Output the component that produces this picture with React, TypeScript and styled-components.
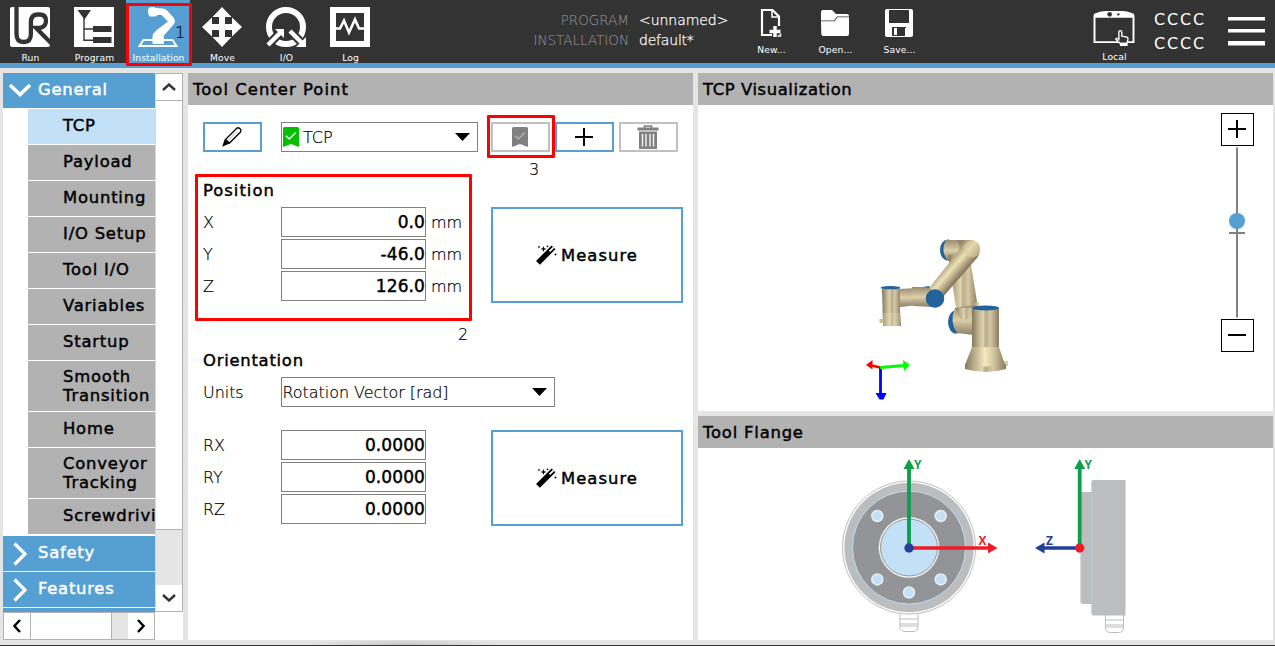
import React from "react";
import styled, { createGlobalStyle, css } from "styled-components";

const BLUE = "#569fd3";
const GREY = "#b2b2b2";
const DARK = "#333333";

const GlobalStyle = createGlobalStyle`
  * { box-sizing: border-box; }
  body { margin: 0; background: #e5e5e5; }
`;

const strong = css`
  font-size: 16.4px;
  font-weight: 400;
  letter-spacing: 1.05px;
  -webkit-text-stroke: 0.45px currentColor;
`;

const light = css`
  font-size: 16px;
  font-weight: 200;
  letter-spacing: -0.05px;
  -webkit-text-stroke: 0.2px currentColor;
`;

const Screen = styled.div`
  position: relative;
  width: 1275px;
  height: 646px;
  overflow: hidden;
  display: flex;
  flex-direction: column;
  background: #e5e5e5;
  border-bottom: 1px solid ${DARK};
  font-family: "DejaVu Sans", sans-serif;
  color: #000;
  white-space: nowrap;
`;

/* ---------- header ---------- */

const Header = styled.header`
  height: 68px;
  flex: none;
  display: flex;
  background: ${DARK};
  border-bottom: 5px solid ${BLUE};
  color: #fff;
`;

const Tabs = styled.nav`
  display: flex;
  margin-left: -2px;
  width: 512px;
`;

const Tab = styled.div<{ $active?: boolean }>`
  width: 64px;
  height: 63px;
  padding-top: 7px;
  display: flex;
  flex-direction: column;
  align-items: center;
  background: ${(p) => (p.$active ? BLUE : "transparent")};
  svg { display: block; flex: none; }
`;

const Caption = styled.span<{ $gap?: number }>`
  margin-top: ${(p) => p.$gap ?? 4}px;
  font-size: 9.2px;
  line-height: 13px;
  letter-spacing: 0.1px;
  padding-left: 1px;
`;

const FileInfo = styled.dl`
  margin: 10px 0 0;
  width: 229px;
  height: 40px;
  display: grid;
  grid-template-columns: 119px 1fr;
  column-gap: 10px;
  grid-auto-rows: 20px;
  line-height: 20px;
`;

const InfoKey = styled.dt`
  text-align: right;
  font-size: 13.5px;
  font-weight: 200;
  color: #999;
`;

const InfoValue = styled.dd<{ $spacing?: number }>`
  margin: 0;
  font-size: 14px;
  font-weight: 200;
  letter-spacing: ${(p) => p.$spacing ?? 0}px;
  -webkit-text-stroke: 0.25px #fff;
`;

const FileActions = styled.div`
  display: flex;
  margin-right: auto;
`;

const FileAction = styled.div`
  width: 64px;
  padding-top: 8px;
  display: flex;
  flex-direction: column;
  align-items: center;
  svg { display: block; }
`;

const Control = styled.div`
  width: 64px;
  padding-top: 7px;
  display: flex;
  flex-direction: column;
  align-items: center;
  svg { display: block; }
`;

const Checksum = styled.div`
  width: 52px;
  margin: 8px 0 0 8px;
  font-size: 16px;
  line-height: 24px;
  letter-spacing: 1.8px;
`;

const MenuButton = styled.div`
  width: 37px;
  margin: 17px 10px 0 22px;
  display: flex;
  flex-direction: column;
  gap: 8px;
`;

const MenuBar = styled.i`
  height: 4.2px;
  background: #fff;
  border-bottom: 1px solid #999;
`;

/* ---------- layout ---------- */

const Main = styled.main`
  flex: 1;
  display: flex;
  gap: 5px;
  padding: 5px 2px 5px 3px;
`;

const Sidebar = styled.aside`
  width: 180px;
  height: 567px;
  background: #fff;
`;

const SidebarTop = styled.div`
  display: flex;
  height: 539px;
`;

const Menu = styled.div`
  width: 152px;
  height: 539px;
  overflow: hidden;
`;

const Group = styled.div<{ $open?: boolean }>`
  height: 36px;
  padding-bottom: 2px;
  border-bottom: 1px solid #fff;
  background: ${BLUE};
  color: #fff;
  display: flex;
  align-items: center;
  ${strong}
  letter-spacing: 0.75px;
  svg {
    width: ${(p) => (p.$open ? 22 : 14)}px;
    margin: ${(p) => (p.$open ? "1px 7px 0 6px" : "2px 11px 0 10px")};
    flex: none;
  }
`;

const Items = styled.div`
  padding-bottom: 1px;
  margin-left: 25px;
`;

const Item = styled.div<{ $active?: boolean; $tall?: boolean }>`
  height: ${(p) => (p.$tall ? 51 : 36)}px;
  border-bottom: 1px solid #fff;
  padding: 0 0 ${(p) => (p.$tall ? 1 : 3)}px 35px;
  display: flex;
  align-items: center;
  background: ${(p) => (p.$active ? "#c2e0f6" : GREY)};
  ${strong}
  letter-spacing: 0.8px;
  line-height: 19px;
  white-space: pre;
`;

const VScroll = styled.div`
  width: 28px;
  border: 1px solid ${GREY};
  border-left-color: #d8d8d8;
  display: flex;
  flex-direction: column;
`;

const ScrollButton = styled.div`
  width: 26px;
  height: 26px;
  flex: none;
  background: #fff;
  display: flex;
  align-items: center;
  justify-content: center;
`;

const VThumb = styled.div`
  height: 430px;
  background: #fff;
  border-top: 1px solid ${GREY};
  border-bottom: 1px solid ${GREY};
`;

const Track = styled.div`
  flex: 1;
  background: #e5e5e5;
`;

const HScroll = styled.div`
  width: 152px;
  height: 28px;
  border: 1px solid ${GREY};
  display: flex;
`;

const HThumb = styled.div`
  width: 82px;
  background: #fff;
  border-left: 1px solid ${GREY};
  border-right: 1px solid ${GREY};
`;

const Panel = styled.section<{ $w: number; $h: number }>`
  width: ${(p) => p.$w}px;
  height: ${(p) => p.$h}px;
  background: #fff;
`;

const PanelTitle = styled.h2<{ $spacing?: number }>`
  margin: 0;
  height: 32px;
  line-height: 32px;
  padding: 1px 0 0 5px;
  background: ${GREY};
  ${strong}
  letter-spacing: ${(p) => p.$spacing ?? 1.05}px;
`;

const RightColumn = styled.div`
  display: flex;
  flex-direction: column;
  gap: 5px;
`;

/* ---------- TCP form ---------- */

const Form = styled.div`
  padding: 17px 10px 0 15px;
`;

const TcpBar = styled.div`
  display: flex;
  height: 30px;
`;

const ToolButton = styled.button<{ $disabled?: boolean; $left?: number }>`
  width: 59px;
  height: 30px;
  margin: 0 0 0 ${(p) => p.$left ?? 0}px;
  padding: 0 2px 0 0;
  border: 2px solid ${(p) => (p.$disabled ? "#c0c0c0" : BLUE)};
  background: #fff;
  display: flex;
  align-items: center;
  justify-content: center;
`;

const Select = styled.div<{ $w: number; $left?: number }>`
  width: ${(p) => p.$w}px;
  height: 30px;
  margin-left: ${(p) => p.$left ?? 0}px;
  padding: 0 7px 0 0.5px;
  border: 1px solid #808080;
  display: flex;
  align-items: center;
  ${light}
  svg:last-child { margin-left: auto; }
`;

const TagIcon = styled.span`
  display: flex;
  margin: 0 4px 0 0.5px;
`;

const SectionTitle = styled.h3<{ $top: number; $spacing?: number }>`
  margin: ${(p) => p.$top}px 0 2px;
  height: 30px;
  line-height: 30px;
  padding-top: 1px;
  ${strong}
  letter-spacing: ${(p) => p.$spacing ?? 1}px;
`;

const FieldBlock = styled.div<{ $top?: number }>`
  margin-top: ${(p) => p.$top ?? 0}px;
  height: 96px;
  display: flex;
  justify-content: space-between;
`;

const Fields = styled.div`
  display: flex;
  flex-direction: column;
  gap: 2px;
`;

const Field = styled.label`
  height: 30px;
  display: flex;
  align-items: center;
  ${light}
`;

const FieldName = styled.span`
  width: 78px;
`;

const FieldValue = styled.span`
  width: 145px;
  height: 30px;
  margin-right: 5px;
  line-height: 29px;
  border: 1px solid #808080;
  text-align: right;
  ${strong}
  font-size: 17px;
  letter-spacing: 0.1px;
`;

const MeasureButton = styled.button`
  width: 192px;
  height: 96px;
  padding: 0 1px 0 0;
  border: 2px solid ${BLUE};
  background: #fff;
  color: #000;
  font-family: inherit;
  display: flex;
  align-items: center;
  justify-content: center;
  gap: 4px;
  ${strong}
`;

/* ---------- 3D view ---------- */

const View = styled.div`
  height: 306px;
  display: flex;
  justify-content: flex-end;
  padding: 8px 19px 0 0;
`;

const Robot = styled.svg`
  margin: 124px 212px 0 0;
`;

const Zoom = styled.div`
  width: 33px;
  display: flex;
  flex-direction: column;
`;

const ZoomButton = styled.div`
  width: 33px;
  height: 33px;
  padding: 0 2px 2px 0;
  border: 1px solid #000;
  display: flex;
  align-items: center;
  justify-content: center;
`;

const Flange = styled.svg`
  display: block;
`;

/* ---------- annotations ---------- */

const Mark = styled.div<{ $x: number; $y: number; $w: number; $h: number }>`
  position: absolute;
  left: ${(p) => p.$x}px;
  top: ${(p) => p.$y}px;
  width: ${(p) => p.$w}px;
  height: ${(p) => p.$h}px;
  border: 3px solid #f00;
  border-radius: 1px;
`;

const MarkNumber = styled.span<{ $x: number; $y: number }>`
  position: absolute;
  left: ${(p) => p.$x}px;
  top: ${(p) => p.$y}px;
  line-height: 20px;
  ${light}
`;

const BottomShade = styled.div`
  position: absolute;
  left: 305px;
  top: 640px;
  width: 200px;
  height: 5px;
  background: radial-gradient(ellipse 100px 6px at 50% 100%, #c6c6c6, #e5e5e5);
`;

/* ---------- icons ---------- */

const RunIcon = () => (
  <svg width="40" height="40" viewBox="0 0 40 40">
    <rect width="40" height="40" rx="2" fill="#fff" />
    <path d="M6.500-1V27q0 8 7.200 8t7.200-8V15q0-7.500 7-7.500h1.600q6.500 0 6.500 6.300T29.500 21H26L42 37" fill="none" stroke={DARK} strokeWidth="4.300" />
  </svg>
);

const ProgramIcon = () => (
  <svg width="40" height="40" viewBox="0 0 40 40">
    <path fill="#fff" d="M0 0h40v40H0z" />
    <path fill={DARK} d="M3.500 3h13.500l-6.500 9.500zM19 19h18.500v6H19zM19 30h18.500v6H19z" />
    <path d="M10 10v23.200h9M10 22h9" stroke={DARK} strokeWidth="1.400" fill="none" />
  </svg>
);

const InstallationIcon = () => (
  <svg width="40" height="40" viewBox="0 0 40 40">
    <path d="M5.500 33h29l4 6h-37z" fill="none" stroke="#fff" strokeWidth="2" />
    <path d="M14.500 37V30q0-5.500 5.500-5.500T26 30v7z" fill="#fff" />
    <path d="M10.500 1.500Q14-1.500 18 1l7 .5q3 .5 5 3l5.500 6q2.500 3 .5 6.500L26.500 28 17 26.500l.5-2.500L30 14.500 23.500 8h-4l-2 1.500h-6q-2.500-4-1-8z" fill="#fff" />
  </svg>
);

const MoveIcon = () => (
  <svg width="40" height="40" viewBox="0 0 40 40">
    <path fill="#fff" d="M20 0l9.500 10H23v7h7v-6.500L40 20l-10 9.500V23h-7v7h6.500L20 40l-9.500-10H17v-7h-7v6.500L0 20l10-9.500V17h7v-7h-6.500z" />
  </svg>
);

const IoIcon = () => (
  <svg width="40" height="40" viewBox="0 0 40 40">
    <circle cx="20" cy="20" r="17" fill="none" stroke="#fff" strokeWidth="6" />
    <path d="M1 39l14-14M24 24l13 13" stroke={DARK} strokeWidth="8.500" />
    <path d="M2 38l12-12M24 24l12 12" stroke="#fff" strokeWidth="4.400" />
    <path d="M9 22h9v9zM40 30v10H30z" fill="#fff" />
  </svg>
);

const LogIcon = () => (
  <svg width="40" height="40" viewBox="0 0 40 40">
    <path fill="#fff" d="M0 0h40v40H0z" />
    <path fill={DARK} d="M6 6h28v28H6z" />
    <path d="M6 21.500h4l4-8 5 12 6-13 4 9h5" stroke="#fff" strokeWidth="2.600" fill="none" />
  </svg>
);

const NewIcon = () => (
  <svg width="22" height="30" viewBox="0 0 22 30">
    <path d="M19 18V8.500L12.500 2H2v25h10" fill="none" stroke="#fff" strokeWidth="2.200" />
    <path d="M12 2v7h8" fill="none" stroke="#fff" strokeWidth="1.500" />
    <path d="M15 18v11M9.500 23.500h11" stroke="#fff" strokeWidth="3.400" />
    <path d="M17.500 28h3v-2.500" stroke="#fff" strokeWidth="1.600" fill="none" />
  </svg>
);

const OpenIcon = () => (
  <svg width="30" height="30" viewBox="0 0 30 30">
    <path fill="#fff" d="M1 4q0-2 2-2h9l4 4h11q2 0 2 2v.5H17l-3 4H1z" />
    <path fill="#fff" d="M1 13.300h13.500l3-4H29V26q0 2-2 2H3.500q-2 0-2.200-2z" />
  </svg>
);

const SaveIcon = () => (
  <svg width="30" height="30" viewBox="0 0 30 30">
    <rect x="1" y="1" width="28" height="28" rx="2" fill="#fff" />
    <path fill={DARK} d="M5 2h20v13H5zM8 19h14v9H8z" />
    <path fill="#fff" d="M10 20h3v7h-3zM21 20h1v8h-1z" />
  </svg>
);

const PendantIcon = () => (
  <svg width="44" height="40" viewBox="0 0 44 40">
    <path fill="#fff" d="M1 9q0-2 2-2.500Q9 4 14 4h16q5 0 11 2.500 2 .5 2 2.500v28H1z" />
    <path fill={DARK} d="M3 11h38v24H3z" />
    <circle cx="17.500" cy="7.500" r="2.400" fill={DARK} />
    <circle cx="26.500" cy="7.500" r="1.200" fill={DARK} />
    <path
      d="M27 26q0-1.800 1.400-1.800t1.600 1.800v4l3 .4 2.300.6q1.200.4 1 2l-1 4.500v2.500h-6.500V38l-5-5q1-1.800 3.200.3z"
      fill={DARK}
      stroke="#fff"
      strokeWidth="1.400"
    />
    <path fill="#fff" d="M28.200 36.500h7V40h-7z" />
  </svg>
);

const Chevron = ({ d, size, stroke = "#333", w = 2.4 }: { d: string; size: [number, number]; stroke?: string; w?: number }) => (
  <svg width={size[0]} height={size[1]} viewBox={`0 0 ${size[0]} ${size[1]}`}>
    <path d={d} fill="none" stroke={stroke} strokeWidth={w} />
  </svg>
);

const Pencil = () => (
  <svg width="22" height="22" viewBox="0 0 22 22">
    <path d="M4.500 13.500L15.500 2.500Q17 1 18.800 2.600T19.500 6L8.500 17z" fill="#fff" stroke="#000" strokeWidth="1.300" />
    <path d="M7 14.500l9-9" stroke="#888" strokeWidth=".6" />
    <path d="M1.200 20.800L3.600 13.500l5 4z" fill="#000" />
  </svg>
);

const Bookmark = ({ color, check }: { color: string; check: string }) => (
  <svg width="16" height="20" viewBox="0 0 16 20">
    <path d="M1.500 0h13Q16 0 16 1.500V20l-8-3-8 3V1.500Q0 0 1.500 0z" fill={color} />
    <path d="M3 8.800l3.300 3.200 6.500-6.500" fill="none" stroke={check} strokeWidth="1.600" />
  </svg>
);

const Plus = () => (
  <svg width="18" height="18" viewBox="0 0 18 18">
    <path d="M9 0v18M0 9h18" stroke="#000" strokeWidth="2" />
  </svg>
);

const Minus = () => (
  <svg width="18" height="18" viewBox="0 0 18 18">
    <path d="M0 9h18" stroke="#000" strokeWidth="2" />
  </svg>
);

const Trash = () => (
  <svg width="22" height="24" viewBox="0 0 22 24">
    <path d="M7.500 3V1h7v2" fill="none" stroke="#808080" strokeWidth="1.700" />
    <path fill="#808080" d="M.5 2.500h21v3H.5zM2 6.500h18V24H2z" />
    <path d="M5.500 9v12.500M9 9v12.500M13 9v12.500M16.500 9v12.500" stroke="#fff" strokeWidth="1.300" />
  </svg>
);

const Arrow = () => (
  <svg width="15" height="8" viewBox="0 0 15 8">
    <path d="M0 0h15L7.500 8z" fill="#000" />
  </svg>
);

const Wand = () => (
  <svg width="22" height="22" viewBox="0 0 22 22">
    <path d="M3 18.800L18.500 3.300" stroke="#000" strokeWidth="5.400" />
    <path d="M14.500 7.300l4-4" stroke="#fff" strokeWidth="1.800" />
    <path d="M8.500 2l.8 2.200 2.200.8-2.200.8-.8 2.200-.8-2.200L5.500 5l2.200-.8zM4 1.500l.4 1.100 1.100.4-1.100.4L4 4.500l-.4-1.100L2.500 3l1.100-.4zM12.500.8l.4 1.100 1.100.4-1.100.4-.4 1.100-.4-1.100-1.100-.4 1.100-.4zM20.500 9l.4 1.100 1.100.4-1.100.4-.4 1.100-.4-1.100-1.100-.4 1.100-.4z" fill="#000" />
  </svg>
);

/* The arm is drawn with one shaded cylinder per link. */
const RobotArm = () => (
  <Robot width="145" height="165" viewBox="864 237 145 165">
    <defs>
      <linearGradient id="metal">
        <stop offset="0" stopColor="#83775f" />
        <stop offset=".25" stopColor="#c2b591" />
        <stop offset=".42" stopColor="#e0d5b2" />
        <stop offset=".5" stopColor="#b9ad8d" />
        <stop offset=".68" stopColor="#d4c8a4" />
        <stop offset="1" stopColor="#887b62" />
      </linearGradient>
      <linearGradient id="metalV" x1="0" y1="0" x2="0" y2="1">
        <stop offset="0" stopColor="#9a8d71" />
        <stop offset=".5" stopColor="#dccfa8" />
        <stop offset="1" stopColor="#8c7f66" />
      </linearGradient>
      <linearGradient id="metalD" gradientUnits="userSpaceOnUse" x1="944" y1="262" x2="960" y2="276">
        <stop offset="0" stopColor="#928568" />
        <stop offset=".5" stopColor="#ede1b6" />
        <stop offset="1" stopColor="#887b60" />
      </linearGradient>
      <linearGradient id="cone">
        <stop offset="0" stopColor="#85785f" />
        <stop offset=".5" stopColor="#f5e9bf" />
        <stop offset=".75" stopColor="#cbbe98" />
        <stop offset="1" stopColor="#8b7e63" />
      </linearGradient>
    </defs>
    <ellipse cx="948" cy="250" rx="8" ry="10.500" fill="#22639c" />
    <path d="M946 240h27v18l-25 3q-8-10-2-21z" fill="url(#metalV)" />
    <path d="M948 255l21-3 9 56-21 6z" fill="url(#metal)" />
    <ellipse cx="956" cy="322" rx="8" ry="11.500" fill="#22639c" />
    <path d="M955 308l19-3v30l-17-2q-8-11-2-25z" fill="url(#metalV)" />
    <path d="M955 308h22l-14 15z" fill="url(#metal)" />
    <circle cx="977" cy="304" r="2" fill="#cbbd94" />
    <path d="M898 289l20-1v17l-18 2z" fill="url(#metalV)" />
    <path d="M912 287h22v20l-21-1q-3-10-1-19z" fill="url(#metalV)" />
    <path d="M923 287l6-1 2 2z" fill="#22639c" />
    <path d="M957 240h15q8 1 8 9 0 5-3 9l-34 39-14-9 28-35q5-7 0-13z" fill="url(#metalD)" />
    <circle cx="972" cy="249" r="8.500" fill="#dfd2a8" opacity=".55" />
    <circle cx="935" cy="298.500" r="9.300" fill="#22639c" />
    <path d="M882 289h18v21l1 16h-18z" fill="url(#metal)" />
    <path d="M883 313h17v14h-17z" fill="#fff3c8" opacity=".2" />
    <path d="M879.500 319h4v4h-4z" fill="#cbbd94" />
    <path d="M881 287q9-2 19 0v1.500q-9 1.700-19 0z" fill="#22639c" />
    <path d="M972 308h27v39h-27z" fill="url(#metal)" />
    <ellipse cx="985.500" cy="308" rx="13.500" ry="2.400" fill="#22639c" />
    <path d="M1004 361h4v5h-4z" fill="#dccf9f" />
    <path d="M972 347h27l6 18q-20 5-40 0z" fill="url(#cone)" />
    <path d="M965 364q20 5 41 0v5q-20 6-41 0z" fill="url(#metal)" />
    <path d="M880.500 367.500v27" stroke="#00f" strokeWidth="2.800" />
    <path d="M875.500 393h11l-3 6.500h-4z" fill="#00f" />
    <path d="M880 367.500l-8-2" stroke="#f00" strokeWidth="2.800" />
    <path d="M866 365l6.500-5v9.500z" fill="#f00" />
    <path d="M880 367.500l24-2" stroke="#0f0" strokeWidth="2.800" />
    <path d="M903 360l7 5-6 6z" fill="#0f0" />
  </Robot>
);

const HOLES: [number, number][] = [[877.3, 516], [940.7, 516], [877.3, 579.4], [940.7, 579.4], [909, 592.5]];

const AxisText = styled.text`
  font-family: "Open Sans", sans-serif;
  font-weight: 700;
  font-size: 12px;
`;

const Plug = ({ x, y }: { x: number; y: number }) => (
  <g transform={`translate(${x} ${y})`}>
    <path d="M0 0v12.500q0 5 5 5h8q5 0 5-5V0" fill="#fff" stroke="#bcbdbf" />
    <path d="M0 5h18M0 10h18M0 12h18" stroke="#bcbdbf" />
  </g>
);

const FlangeDrawing = () => (
  <Flange width="575" height="192" viewBox="698 448 575 192">
    <Plug x={900} y={614} />
    <circle cx="909" cy="547.500" r="66.500" fill="#fff" stroke="#bcbdbf" />
    <circle cx="909" cy="547.500" r="64.700" fill="#bcbdbf" />
    <circle cx="909" cy="547.500" r="56.500" fill="#939498" stroke="#bfdff5" />
    <circle cx="909" cy="547.500" r="30.200" fill="#fff" stroke="#ccc" strokeWidth=".5" />
    <circle cx="909" cy="547.500" r="28.500" fill="#c2e1f7" stroke="#888a8d" strokeWidth=".9" />
    {HOLES.map(([x, y]) => (
      <circle key={`${x}-${y}`} cx={x} cy={y} r="5.500" fill="#c2e1f7" stroke="#e8eef3" strokeWidth="1.500" />
    ))}
    <path d="M909 547V468" stroke="#0ba14b" strokeWidth="3.800" />
    <path d="M903.500 469l5.500-10 5.500 10z" fill="#0ba14b" />
    <path d="M909 548h80" stroke="#ee1c25" strokeWidth="3.600" />
    <path d="M988 542.500l9.500 5.500-9.500 5.500z" fill="#ee1c25" />
    <circle cx="909" cy="548" r="4.700" fill="#21409a" />
    <AxisText x="914" y="468.500" fill="#0ba14b">Y</AxisText>
    <AxisText x="978.500" y="545" fill="#ee1c25">X</AxisText>

    <Plug x={1105.5} y={615} />
    <path d="M1080.500 492h11.500v112h-9q-2.500 0-2.500-2z" fill="#bcbdbf" />
    <path d="M1091.500 482q0-2 2-2h32v135.500h-32q-2 0-2-2z" fill="#bcbdbf" />
    <path d="M1092 482v132" stroke="#b3cfe3" strokeWidth="1.200" />
    <path d="M1080.800 550v53" stroke="#d6d6d6" />
    <path d="M1079.700 547V468" stroke="#0ba14b" strokeWidth="3.800" />
    <path d="M1074.200 469l5.500-10 5.500 10z" fill="#0ba14b" />
    <path d="M1080 548h-36" stroke="#21409a" strokeWidth="3.600" />
    <path d="M1044.500 542.500L1035 548l9.500 5.500z" fill="#21409a" />
    <circle cx="1079.700" cy="548" r="4.700" fill="#ee1c25" />
    <AxisText x="1084.500" y="468.500" fill="#0ba14b">Y</AxisText>
    <AxisText x="1046" y="545" fill="#21409a">Z</AxisText>
  </Flange>
);

const TABS = [
  { name: "Run", icon: <RunIcon /> },
  { name: "Program", icon: <ProgramIcon /> },
  { name: "Installation", icon: <InstallationIcon /> },
  { name: "Move", icon: <MoveIcon /> },
  { name: "I/O", icon: <IoIcon /> },
  { name: "Log", icon: <LogIcon /> },
];

const ITEMS = ["TCP", "Payload", "Mounting", "I/O Setup", "Tool I/O", "Variables", "Startup", "Smooth\nTransition", "Home", "Conveyor\nTracking", "Screwdriving"];

const Values = ({ rows, unit }: { rows: [string, string][]; unit?: string }) => (
  <Fields>
    {rows.map(([name, value]) => (
      <Field key={name}>
        <FieldName>{name}</FieldName>
        <FieldValue>{value}</FieldValue>
        {unit}
      </Field>
    ))}
  </Fields>
);

export default function App() {
  return (
    <Screen>
      <GlobalStyle />
      <Header>
        <Tabs>
          {TABS.map((t) => (
            <Tab key={t.name} $active={t.name === "Installation"}>
              {t.icon}
              <Caption>{t.name}</Caption>
            </Tab>
          ))}
        </Tabs>
        <FileInfo>
          <InfoKey>PROGRAM</InfoKey>
          <InfoValue $spacing={-0.05}>&lt;unnamed&gt;</InfoValue>
          <InfoKey>INSTALLATION</InfoKey>
          <InfoValue $spacing={-0.2}>default*</InfoValue>
        </FileInfo>
        <FileActions>
          <FileAction><NewIcon /><Caption $gap={5}>New...</Caption></FileAction>
          <FileAction><OpenIcon /><Caption $gap={5}>Open...</Caption></FileAction>
          <FileAction><SaveIcon /><Caption $gap={5}>Save...</Caption></FileAction>
        </FileActions>
        <Control><PendantIcon /><Caption>Local</Caption></Control>
        <Checksum>CCCC<br />CCCC</Checksum>
        <MenuButton><MenuBar /><MenuBar /><MenuBar /></MenuButton>
      </Header>

      <Main>
        <Sidebar>
          <SidebarTop>
            <Menu>
              <Group $open><Chevron size={[22, 16]} d="M1 3l10 9.500L21 3" stroke="#fff" w={3.6} />General</Group>
              <Items>
                {ITEMS.map((name) => (
                  <Item key={name} $active={name === "TCP"} $tall={name.includes("\n")}>{name}</Item>
                ))}
              </Items>
              <Group><Chevron size={[14, 24]} d="M1.500 1.500L12 12 1.500 22.500" stroke="#fff" w={3.2} />Safety</Group>
              <Group><Chevron size={[14, 24]} d="M1.500 1.500L12 12 1.500 22.500" stroke="#fff" w={3.2} />Features</Group>
              <Group />
            </Menu>
            <VScroll>
              <ScrollButton><Chevron size={[14, 8]} d="M1 7l6-5.500L13 7" /></ScrollButton>
              <VThumb />
              <Track />
              <ScrollButton><Chevron size={[14, 8]} d="M1 1l6 5.500L13 1" /></ScrollButton>
            </VScroll>
          </SidebarTop>
          <HScroll>
            <ScrollButton><Chevron size={[8, 14]} d="M7 1L1.500 7 7 13" stroke="#000" /></ScrollButton>
            <HThumb />
            <Track />
            <ScrollButton><Chevron size={[8, 14]} d="M1 1l5.500 6L1 13" stroke="#000" /></ScrollButton>
          </HScroll>
        </Sidebar>

        <Panel $w={505} $h={567}>
          <PanelTitle>Tool Center Point</PanelTitle>
          <Form>
            <TcpBar>
              <ToolButton><Pencil /></ToolButton>
              <Select $w={197} $left={19}>
                <TagIcon><Bookmark color="#00c000" check="#fff" /></TagIcon>
                TCP
                <Arrow />
              </Select>
              <ToolButton $disabled $left={13}><Bookmark color="#808080" check="#b0b0b0" /></ToolButton>
              <ToolButton $left={5}><Plus /></ToolButton>
              <ToolButton $disabled $left={5}><Trash /></ToolButton>
            </TcpBar>

            <SectionTitle $top={23}>Position</SectionTitle>
            <FieldBlock>
              <Values unit="mm" rows={[["X", "0.0"], ["Y", "-46.0"], ["Z", "126.0"]]} />
              <MeasureButton><Wand />Measure</MeasureButton>
            </FieldBlock>

            <SectionTitle $top={42} $spacing={0.75}>Orientation</SectionTitle>
            <Field>
              <FieldName>Units</FieldName>
              <Select $w={274}>Rotation Vector [rad]<Arrow /></Select>
            </Field>
            <FieldBlock $top={23}>
              <Values rows={[["RX", "0.0000"], ["RY", "0.0000"], ["RZ", "0.0000"]]} />
              <MeasureButton><Wand />Measure</MeasureButton>
            </FieldBlock>
          </Form>
        </Panel>

        <RightColumn>
          <Panel $w={575} $h={338}>
            <PanelTitle $spacing={0.6}>TCP Visualization</PanelTitle>
            <View>
              <RobotArm />
              <Zoom>
                <ZoomButton><Plus /></ZoomButton>
                <svg width="33" height="173" viewBox="0 0 33 173">
                  <path d="M16 1.500v170M8 87h16" stroke="#808080" strokeWidth="2" />
                  <circle cx="16" cy="75" r="8" fill={BLUE} />
                </svg>
                <ZoomButton><Minus /></ZoomButton>
              </Zoom>
            </View>
          </Panel>
          <Panel $w={575} $h={224}>
            <PanelTitle $spacing={0.8}>Tool Flange</PanelTitle>
            <FlangeDrawing />
          </Panel>
        </RightColumn>
      </Main>

      <BottomShade />
      <Mark $x={126} $y={3} $w={66} $h={63} />
      <MarkNumber $x={175} $y={23}>1</MarkNumber>
      <Mark $x={195} $y={174} $w={277} $h={147} />
      <MarkNumber $x={458} $y={325}>2</MarkNumber>
      <Mark $x={487} $y={115} $w={68} $h={43} />
      <MarkNumber $x={529} $y={160}>3</MarkNumber>
    </Screen>
  );
}
